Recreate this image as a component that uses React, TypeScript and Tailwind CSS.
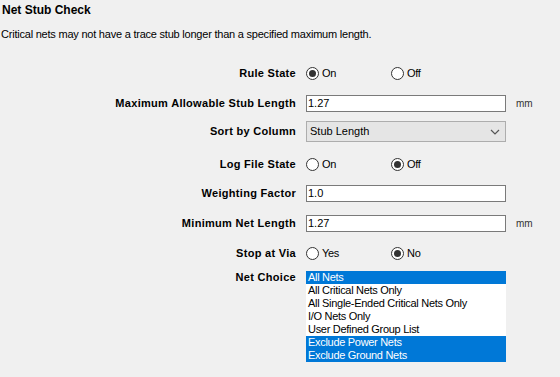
import React from "react";

const font = { fontFamily: '"Liberation Sans", Arial, sans-serif' };

function Radio({ checked, label }: { checked?: boolean; label: string }) {
  return (
    <span className="inline-flex items-center gap-[3px] w-[85px]">
      <span className="w-[13px] h-[13px] rounded-full border border-[#333333] bg-white flex items-center justify-center shrink-0">
        {checked && <span className="w-[7px] h-[7px] rounded-full bg-[#333333]" />}
      </span>
      <span className="text-[11px] tracking-[-0.3px] text-black">{label}</span>
    </span>
  );
}

function Label({ children }: { children: React.ReactNode }) {
  return (
    <div className="w-[296px] shrink-0 text-right text-[11px] font-bold tracking-[0.3px] text-black">
      {children}
    </div>
  );
}

function TextBox({ value }: { value: string }) {
  return (
    <div className="w-[200px] h-[17px] border border-[#7a7a7a] bg-white flex items-center pl-[1px] text-[11px] text-black">
      {value}
    </div>
  );
}

const netChoices = [
  { name: "All Nets", selected: true },
  { name: "All Critical Nets Only", selected: false },
  { name: "All Single-Ended Critical Nets Only", selected: false },
  { name: "I/O Nets Only", selected: false },
  { name: "User Defined Group List", selected: false },
  { name: "Exclude Power Nets", selected: true },
  { name: "Exclude Ground Nets", selected: true },
];

export default function App() {
  return (
    <div className="w-[560px] h-[377px] bg-[#f0f0f0] overflow-hidden text-black" style={font}>
      {/* Header */}
      <div className="pt-[3px] pl-[2px] text-[12px] font-bold leading-[14px]">Net Stub Check</div>
      <div className="mt-[10px] pl-[1px] text-[11px] leading-[14px] tracking-[-0.22px]">
        Critical nets may not have a trace stub longer than a specified maximum length.
      </div>

      {/* Rule rows */}
      <div className="flex flex-col">
        <div className="flex items-center gap-[10px] h-[20px] mt-[22px]">
          <Label>Rule State</Label>
          <div className="flex">
            <Radio checked label="On" />
            <Radio label="Off" />
          </div>
        </div>

        <div className="flex items-center gap-[10px] h-[20px] mt-[10px]">
          <Label>Maximum Allowable Stub Length</Label>
          <TextBox value="1.27" />
          <span className="text-[10px] text-[#333333]">mm</span>
        </div>

        <div className="flex items-center gap-[10px] h-[21px] mt-[8px]">
          <Label>Sort by Column</Label>
          <div className="w-[200px] h-[21px] border border-[#adadad] bg-[#e5e5e5] flex items-center justify-between pl-[3px] pr-[5px] text-[11px]">
            <span>Stub Length</span>
            <svg width="10" height="6" viewBox="0 0 10 6" fill="none">
              <path d="M1 1 L5 5 L9 1" stroke="#555555" strokeWidth="1.2" />
            </svg>
          </div>
        </div>

        <div className="flex items-center gap-[10px] h-[20px] mt-[12px]">
          <Label>Log File State</Label>
          <div className="flex">
            <Radio label="On" />
            <Radio checked label="Off" />
          </div>
        </div>

        <div className="flex items-center gap-[10px] h-[20px] mt-[9px]">
          <Label>Weighting Factor</Label>
          <TextBox value="1.0" />
        </div>

        <div className="flex items-center gap-[10px] h-[20px] mt-[10px]">
          <Label>Minimum Net Length</Label>
          <TextBox value="1.27" />
          <span className="text-[10px] text-[#333333]">mm</span>
        </div>

        <div className="flex items-center gap-[10px] h-[20px] mt-[10px]">
          <Label>Stop at Via</Label>
          <div className="flex">
            <Radio label="Yes" />
            <Radio checked label="No" />
          </div>
        </div>

        <div className="flex items-start gap-[10px] mt-[8px]">
          <div className="leading-[13px]">
            <Label>Net Choice</Label>
          </div>
          <div className="w-[200px] bg-white flex flex-col">
            {netChoices.map((n) => (
              <div
                key={n.name}
                className={`h-[13px] leading-[13px] pl-[2px] text-[11px] tracking-[-0.3px] whitespace-nowrap ${
                  n.selected ? "bg-[#0078d7] text-white" : "text-black"
                }`}
              >
                {n.name}
              </div>
            ))}
          </div>
        </div>
      </div>
    </div>
  );
}
